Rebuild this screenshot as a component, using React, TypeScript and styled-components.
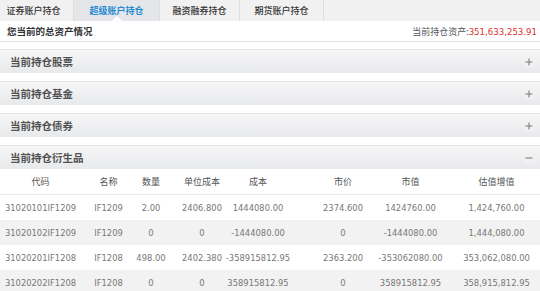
import React from "react";
import styled, { createGlobalStyle } from "styled-components";

const GlobalStyle = createGlobalStyle`
  html, body { margin: 0; padding: 0; background: #ffffff; }
  body {
    font-family: "DejaVu Sans", "Noto Sans CJK SC", sans-serif;
    -webkit-font-smoothing: antialiased;
  }
  * { box-sizing: border-box; }
`;

const CJK = `"Noto Sans CJK SC", "DejaVu Sans", sans-serif`;
const NUM = `"DejaVu Sans", "Noto Sans CJK SC", sans-serif`;

const Page = styled.div`
  width: 540px;
  overflow: hidden;
`;

const TabBar = styled.div`
  display: flex;
  height: 21px;
  background: #f1f1f1;
`;

const Tab = styled.div<{ $w: number; $pad: number; $active?: boolean }>`
  position: relative;
  width: ${(p) => p.$w}px;
  flex: none;
  display: flex;
  align-items: center;
  justify-content: center;
  padding-right: ${(p) => p.$pad}px;
  font-family: ${CJK};
  font-size: 9px;
  font-weight: ${(p) => (p.$active ? 700 : 500)};
  color: ${(p) => (p.$active ? "#1f8bd3" : "#333")};
  background: ${(p) => (p.$active ? "#e4e6e9" : "transparent")};
  border-right: 1px solid #dedede;
  &::after {
    content: "";
    display: ${(p) => (p.$active ? "block" : "none")};
    position: absolute;
    left: 50%;
    bottom: 0;
    margin-left: -5px;
    border-left: 5px solid transparent;
    border-right: 5px solid transparent;
    border-bottom: 5px solid #ffffff;
  }
`;

const Summary = styled.div`
  height: 21px;
  display: flex;
  align-items: center;
  justify-content: space-between;
  padding: 0 3px 0 7px;
  border-bottom: 1px solid #dddddd;
  margin-bottom: 7px;
`;

const SummaryTitle = styled.span`
  font-family: ${CJK};
  font-size: 9.5px;
  font-weight: 700;
  color: #333;
`;

const SummaryRight = styled.span`
  font-family: ${CJK};
  font-size: 9px;
  color: #555;
`;

const Red = styled.span`
  font-family: ${NUM};
  font-size: 8.6px;
  color: #e0312b;
`;

const Section = styled.div`
  margin-bottom: 8px;
  &:last-of-type { margin-bottom: 0; }
`;

const SectionHeader = styled.div`
  height: 24px;
  display: flex;
  align-items: center;
  justify-content: space-between;
  padding: 0 6px 0 10px;
  border-top: 1px solid #e2e3e5;
  background: linear-gradient(#f6f6f7, #e8e9eb);
`;

const SectionTitle = styled.span`
  font-family: ${CJK};
  font-size: 10.5px;
  font-weight: 700;
  color: #525252;
`;

const Toggle = styled.svg`
  width: 10px;
  height: 10px;
  display: block;
`;

const Row = styled.div<{ $head?: boolean; $alt?: boolean }>`
  display: grid;
  grid-template-columns: 75px 55px 46px 54px 70px 76px 77px 87px;
  height: ${(p) => (p.$head ? 26 : 25)}px;
  background: ${(p) => (p.$alt ? "#f2f2f2" : "#ffffff")};
  border-bottom: ${(p) => (p.$head ? "1px solid #e8e8e8" : "none")};
`;

const Cell = styled.div<{ $shift: number; $head?: boolean }>`
  display: flex;
  align-items: center;
  justify-content: center;
  white-space: nowrap;
  min-width: 0;
  padding-left: ${(p) => (p.$shift > 0 ? p.$shift * 2 : 0)}px;
  padding-right: ${(p) => (p.$shift < 0 ? -p.$shift * 2 : 0)}px;
  font-family: ${(p) => (p.$head ? CJK : NUM)};
  font-size: ${(p) => (p.$head ? 9 : 8.4)}px;
  color: ${(p) => (p.$head ? "#555" : "#777")};
`;

const columns = [
  { label: "代码", shift: 3 },
  { label: "名称", shift: 6 },
  { label: "数量", shift: -2 },
  { label: "单位成本", shift: -1 },
  { label: "成本", shift: -7 },
  { label: "市价", shift: 5 },
  { label: "市值", shift: -4 },
  { label: "估值增值", shift: 0 },
];

const rows = [
  ["31020101IF1209", "IF1209", "2.00", "2406.800", "1444080.00", "2374.600", "1424760.00", "1,424,760.00"],
  ["31020102IF1209", "IF1209", "0", "0", "-1444080.00", "0", "-1444080.00", "1,444,080.00"],
  ["31020201IF1208", "IF1208", "498.00", "2402.380", "-358915812.95", "2363.200", "-353062080.00", "353,062,080.00"],
  ["31020202IF1208", "IF1208", "0", "0", "358915812.95", "0", "358915812.95", "358,915,812.95"],
];

const tabs = [
  { label: "证券账户持仓", w: 74, pad: 6 },
  { label: "超级账户持仓", w: 86, pad: 0, active: true },
  { label: "融资融券持仓", w: 80, pad: 0 },
  { label: "期货账户持仓", w: 84, pad: 0 },
];

const sections = ["当前持仓股票", "当前持仓基金", "当前持仓债券", "当前持仓衍生品"];

function ToggleIcon({ open }: { open: boolean }) {
  return (
    <Toggle viewBox="0 0 10 10">
      <rect x="0" y="0" width="10" height="10" fill="#f1f1f2" />
      <path d="M1.5 5h7" stroke="#8f8f8f" strokeWidth="1.3" />
      {!open && <path d="M5 1.5v7" stroke="#8f8f8f" strokeWidth="1.3" />}
    </Toggle>
  );
}

export default function App() {
  return (
    <Page>
      <GlobalStyle />
      <TabBar>
        {tabs.map((t) => (
          <Tab key={t.label} $w={t.w} $pad={t.pad} $active={t.active}>
            {t.label}
          </Tab>
        ))}
      </TabBar>
      <Summary>
        <SummaryTitle>您当前的总资产情况</SummaryTitle>
        <SummaryRight>
          当前持仓资产:<Red>351,633,253.91</Red>
        </SummaryRight>
      </Summary>
      {sections.map((s, i) => {
        const open = i === sections.length - 1;
        return (
          <Section key={s}>
            <SectionHeader>
              <SectionTitle>{s}</SectionTitle>
              <ToggleIcon open={open} />
            </SectionHeader>
            {open && (
              <div>
                <Row $head>
                  {columns.map((c) => (
                    <Cell key={c.label} $head $shift={c.shift}>
                      {c.label}
                    </Cell>
                  ))}
                </Row>
                {rows.map((r, ri) => (
                  <Row key={ri} $alt={ri % 2 === 1}>
                    {r.map((v, ci) => (
                      <Cell key={ci} $shift={columns[ci].shift}>
                        {v}
                      </Cell>
                    ))}
                  </Row>
                ))}
              </div>
            )}
          </Section>
        );
      })}
    </Page>
  );
}
